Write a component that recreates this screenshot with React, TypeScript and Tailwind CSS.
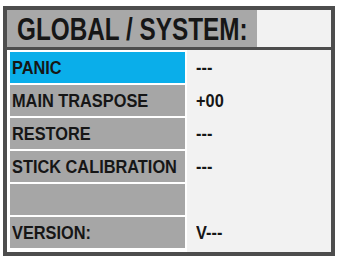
import React from "react";

const rows: { label: string; value: string; active?: boolean }[] = [
  { label: "PANIC", value: "---", active: true },
  { label: "MAIN TRASPOSE", value: "+00" },
  { label: "RESTORE", value: "---" },
  { label: "STICK CALIBRATION", value: "---" },
  { label: "", value: "" },
  { label: "VERSION:", value: "V---" },
];

export default function App() {
  return (
    <div className="w-[339px] h-[259px] bg-white pt-[6px] pl-[3px] font-['Liberation_Sans',Arial,sans-serif]">
      <div className="w-[332px] h-[250px] border-[4px] border-[#4d4d4d] bg-white flex flex-col">
        <div className="h-[37px] flex">
          <div className="w-[250px] bg-[#a8a8a8] flex items-center pl-[10px] overflow-hidden">
            <span className="inline-block whitespace-nowrap origin-left scale-x-[0.76] text-[32px] font-bold text-[#161616] leading-none">GLOBAL / SYSTEM:</span>
          </div>
          <div className="flex-1 bg-[#f2f2f2]" />
        </div>
        <div className="h-[3px] bg-[#4d4d4d]" />
        <div className="flex-1 flex">
          <div className="w-[180px] flex flex-col gap-[2px] pt-[2px] pl-[3px] pr-[2px]">
            {rows.map((r, i) => (
              <div
                key={i}
                className={`h-[31px] flex items-center pl-[2px] overflow-hidden ${r.active ? "bg-[#0aaeea]" : "bg-[#a6a6a6]"}`}
              >
                <span className="inline-block whitespace-nowrap origin-left scale-x-[0.86] text-[19px] font-bold text-[#161616] leading-none">{r.label}</span>
              </div>
            ))}
          </div>
          <div className="flex-1 bg-[#f2f2f2] flex flex-col gap-[2px] pt-[2px] pl-[9px]">
            {rows.map((r, i) => (
              <div key={i} className="h-[31px] flex items-center">
                <span className="inline-block whitespace-nowrap origin-left scale-x-[0.86] text-[19px] font-bold text-[#161616] leading-none">{r.value}</span>
              </div>
            ))}
          </div>
        </div>
      </div>
    </div>
  );
}
